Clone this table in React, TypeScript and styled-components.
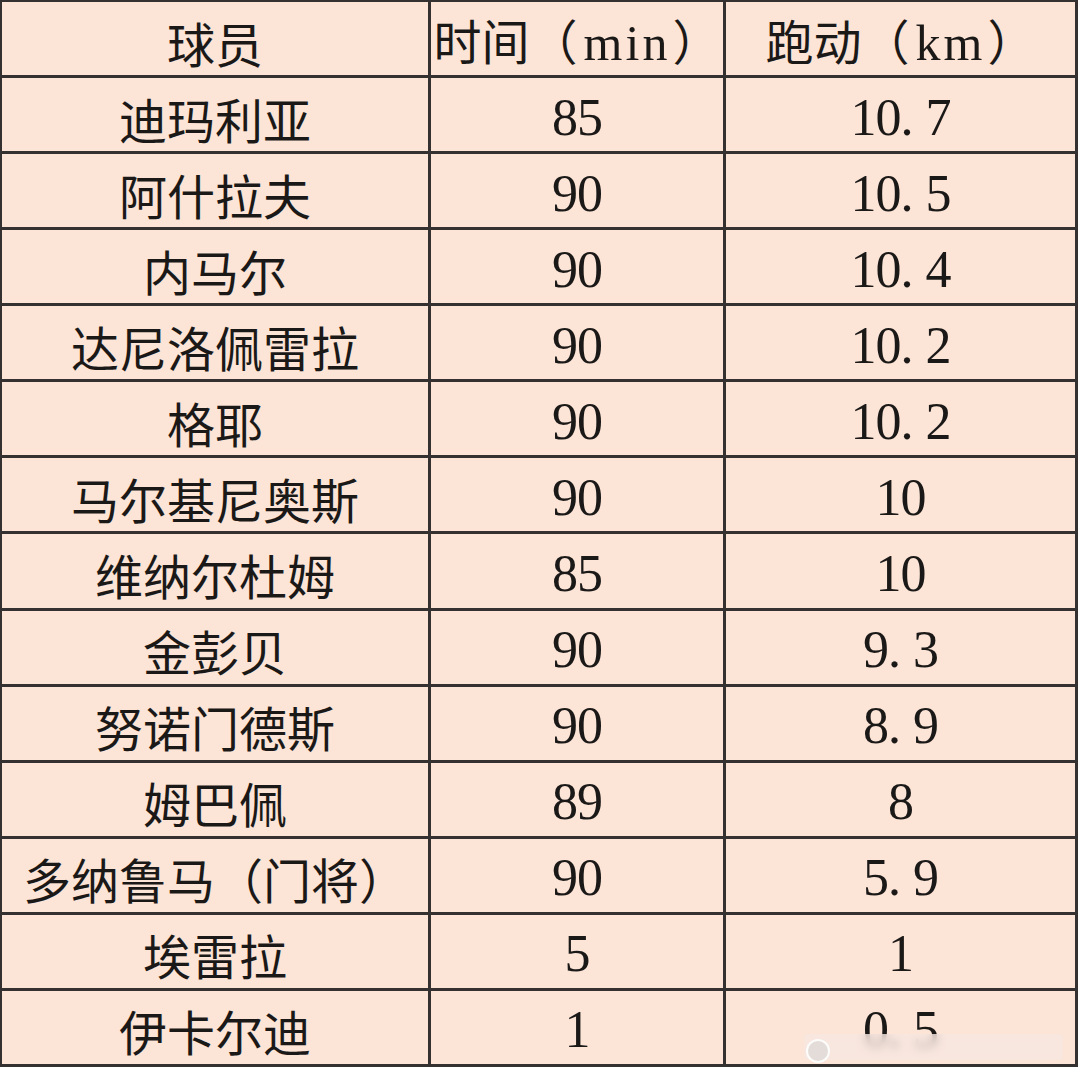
import React from "react";
import styled, { createGlobalStyle } from "styled-components";

const Global = createGlobalStyle`
  html, body { margin: 0; padding: 0; background: #fce4d6; }
  #root { width: 1078px; height: 1067px; }
`;

const Table = styled.div`
  box-sizing: border-box;
  width: 1078px;
  height: 1067px;
  display: grid;
  grid-template-columns: 426px 292px 1fr;
  grid-template-rows: repeat(14, 1fr);
  gap: 3px;
  padding: 2px 3px 3px 2px;
  background: #353130;
`;

const Cell = styled.div`
  position: relative;
  background: #fce4d6;
  display: flex;
  align-items: center;
  justify-content: center;
  padding-top: 6px;
  box-sizing: border-box;
  color: #1b1918;
  font-family: "Liberation Serif", "Noto Sans CJK SC", serif;
  font-size: 48px;
  line-height: 1;
  white-space: nowrap;
  overflow: hidden;
`;

const Line = styled.span`
  font-family: "Noto Sans CJK SC", sans-serif;
  font-size: 48px;
  text-spacing-trim: space-all;
`;

const Han = styled.span`
  font-family: "Noto Sans CJK SC", sans-serif;
  font-weight: 400;
  font-size: 48px;
`;

const Latin = styled.span`
  font-family: "Liberation Serif", serif;
  font-size: 50px;
  letter-spacing: 3px;
  margin: 0 2px 0 6px;
`;

const NumWrap = styled.span`
  display: inline-flex;
  font-family: "Liberation Serif", serif;
  font-size: 52px;
`;

const Ch = styled.span<{ $dot?: boolean }>`
  display: inline-block;
  width: 25px;
  text-align: ${(p) => (p.$dot ? "left" : "center")};
`;

const Watermark = styled.div`
  position: absolute;
  left: 78px;
  right: 12px;
  top: 43px;
  bottom: 4px;
  backdrop-filter: blur(5px);
  background: rgba(246, 232, 226, 0.72);
  border-radius: 4px;
`;

const WmCircle = styled.div`
  position: absolute;
  left: 80px;
  top: 48px;
  width: 20px;
  height: 20px;
  border-radius: 50%;
  border: 2px solid rgba(255, 255, 255, 0.9);
  background: rgba(220, 215, 212, 0.7);
`;

function Num({ v }: { v: string }) {
  return (
    <NumWrap>
      {v.split("").map((c, i) => (
        <Ch key={i} $dot={c === "."}>
          {c}
        </Ch>
      ))}
    </NumWrap>
  );
}

function Head({ zh, unit }: { zh: string; unit: string }) {
  return (
    <Cell>
      <Line>
        {zh}（<Latin>{unit}</Latin>）
      </Line>
    </Cell>
  );
}

const rows: [string, string, string][] = [
  ["迪玛利亚", "85", "10.7"],
  ["阿什拉夫", "90", "10.5"],
  ["内马尔", "90", "10.4"],
  ["达尼洛佩雷拉", "90", "10.2"],
  ["格耶", "90", "10.2"],
  ["马尔基尼奥斯", "90", "10"],
  ["维纳尔杜姆", "85", "10"],
  ["金彭贝", "90", "9.3"],
  ["努诺门德斯", "90", "8.9"],
  ["姆巴佩", "89", "8"],
  ["多纳鲁马（门将）", "90", "5.9"],
  ["埃雷拉", "5", "1"],
  ["伊卡尔迪", "1", "0.5"],
];

export default function App() {
  return (
    <>
      <Global />
      <Table>
        <Cell>
          <Han>球员</Han>
        </Cell>
        <Head zh="时间" unit="min" />
        <Head zh="跑动" unit="km" />
        {rows.map(([name, t, d], i) => (
          <React.Fragment key={name}>
            <Cell>
              <Han>{name}</Han>
            </Cell>
            <Cell>
              <Num v={t} />
            </Cell>
            <Cell>
              <Num v={d} />
              {i === rows.length - 1 && (
                <>
                  <Watermark />
                  <WmCircle />
                </>
              )}
            </Cell>
          </React.Fragment>
        ))}
      </Table>
    </>
  );
}
